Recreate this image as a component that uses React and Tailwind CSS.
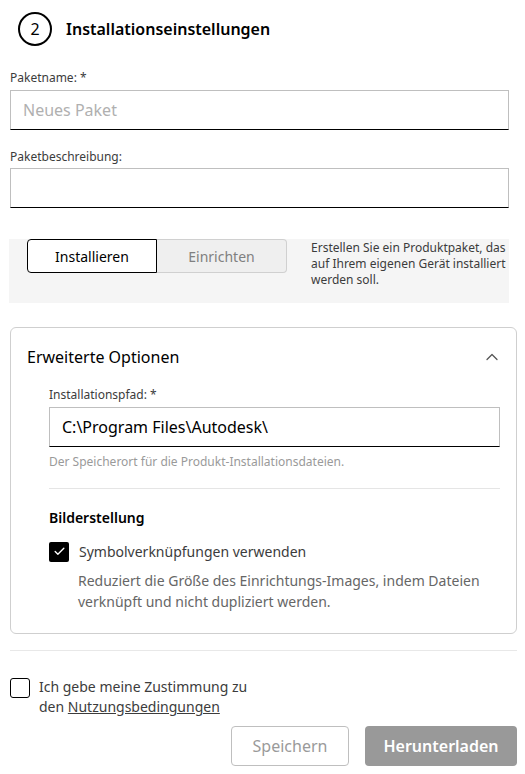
import { ChevronUp, Check } from 'lucide-react';

const font = { fontFamily: '"Noto Sans", "Open Sans", sans-serif' };

const App = () => {
  return (
    <div className="min-h-screen w-[525px] bg-white text-[#3c3c3c]" style={font}>
      <div className="px-[10px] pt-[12px]">
        <div className="flex items-center gap-[14px] pl-[8px]">
          <div className="flex h-[34px] w-[34px] items-center justify-center rounded-full border-2 border-black text-[16px] text-black">
            2
          </div>
          <div className="text-[16px] font-semibold text-black">Installationseinstellungen</div>
        </div>

        <div className="mt-[24px]">
          <div className="text-[12px] leading-[16px] text-[#3c3c3c]">Paketname: *</div>
          <div className="mt-[4px] flex h-[40px] w-[499px] items-center border border-b-black border-[#bfbfbf] px-[12px] text-[16px] text-[#b0b0b0]">
            Neues Paket
          </div>
        </div>

        <div className="mt-[19px]">
          <div className="text-[12px] leading-[16px] text-[#3c3c3c]">Paketbeschreibung:</div>
          <div className="mt-[3px] h-[40px] w-[499px] border border-b-black border-[#bfbfbf]" />
        </div>
      </div>

      <div className="ml-[9px] mt-[31px] flex h-[64px] w-[500px] gap-[24px] bg-[#f5f5f5] pl-[18px]">
        <div className="flex h-[34px]">
          <div className="flex w-[130px] items-center justify-center rounded-l-[4px] border border-black bg-white text-[14px] text-black">
            Installieren
          </div>
          <div className="flex w-[130px] items-center justify-center rounded-r-[4px] border border-l-0 border-[#d0d0d0] bg-[#efefef] text-[14px] text-[#808080]">
            Einrichten
          </div>
        </div>
        <div className="w-[200px] pt-[1px] text-[12px] leading-[16px] text-[#3c3c3c]">
          Erstellen Sie ein Produktpaket, das auf Ihrem eigenen Gerät installiert werden soll.
        </div>
      </div>

      <div className="ml-[10px] mt-[24px] w-[507px] rounded-[6px] border border-[#cfcfcf] pb-[21px]">
        <div className="flex items-center justify-between pl-[16px] pr-[14px] pt-[17px]">
          <div className="text-[16px] text-black">Erweiterte Optionen</div>
          <ChevronUp size={20} strokeWidth={1.5} className="text-[#555]" />
        </div>

        <div className="pl-[38px] pr-[17px]">
          <div className="mt-[18px] text-[12px] leading-[16px] text-[#3c3c3c]">Installationspfad: *</div>
          <div className="mt-[4px] flex h-[40px] w-[451px] items-center border border-b-black border-[#bfbfbf] px-[12px] text-[16px] text-black">
            C:\Program Files\Autodesk\
          </div>
          <div className="mt-[7px] text-[12px] leading-[16px] text-[#9a9a9a]">
            Der Speicherort für die Produkt-Installationsdateien.
          </div>
          <div className="mt-[18px] w-[451px] border-t border-[#e5e5e5]" />

          <div className="mt-[18px] text-[14px] font-semibold text-black">Bilderstellung</div>

          <div className="mt-[13px] flex items-center gap-[10px]">
            <div className="flex h-[20px] w-[20px] items-center justify-center rounded-[2px] bg-black">
              <Check size={13} strokeWidth={2.5} className="text-white" />
            </div>
            <div className="text-[14px] text-[#3c3c3c]">Symbolverknüpfungen verwenden</div>
          </div>
          <div className="ml-[29px] mt-[8px] w-[410px] text-[14px] leading-[21px] text-[#666]">
            Reduziert die Größe des Einrichtungs-Images, indem Dateien verknüpft und nicht dupliziert werden.
          </div>
        </div>
      </div>

      <div className="ml-[10px] mt-[16px] w-[507px] border-t border-[#e8e8e8]" />

      <div className="ml-[10px] mt-[26px] flex items-start gap-[9px]">
        <div className="mt-[1px] h-[20px] w-[20px] rounded-[3px] border border-black" />
        <div className="text-[14px] leading-[20px] text-[#3c3c3c]">
          Ich gebe meine Zustimmung zu
          <br />
          den <span className="underline">Nutzungsbedingungen</span>
        </div>
      </div>

      <div className="mt-[9px] flex justify-end gap-[16px] pr-[8px]">
        <button type="button" className="h-[40px] w-[118px] rounded-[4px] border border-[#bfbfbf] bg-white text-[16px] text-[#9a9a9a]">
          Speichern
        </button>
        <button type="button" className="h-[40px] w-[152px] rounded-[4px] bg-[#999] text-[16px] font-semibold text-white">
          Herunterladen
        </button>
      </div>
    </div>
  );
};

export default App;
